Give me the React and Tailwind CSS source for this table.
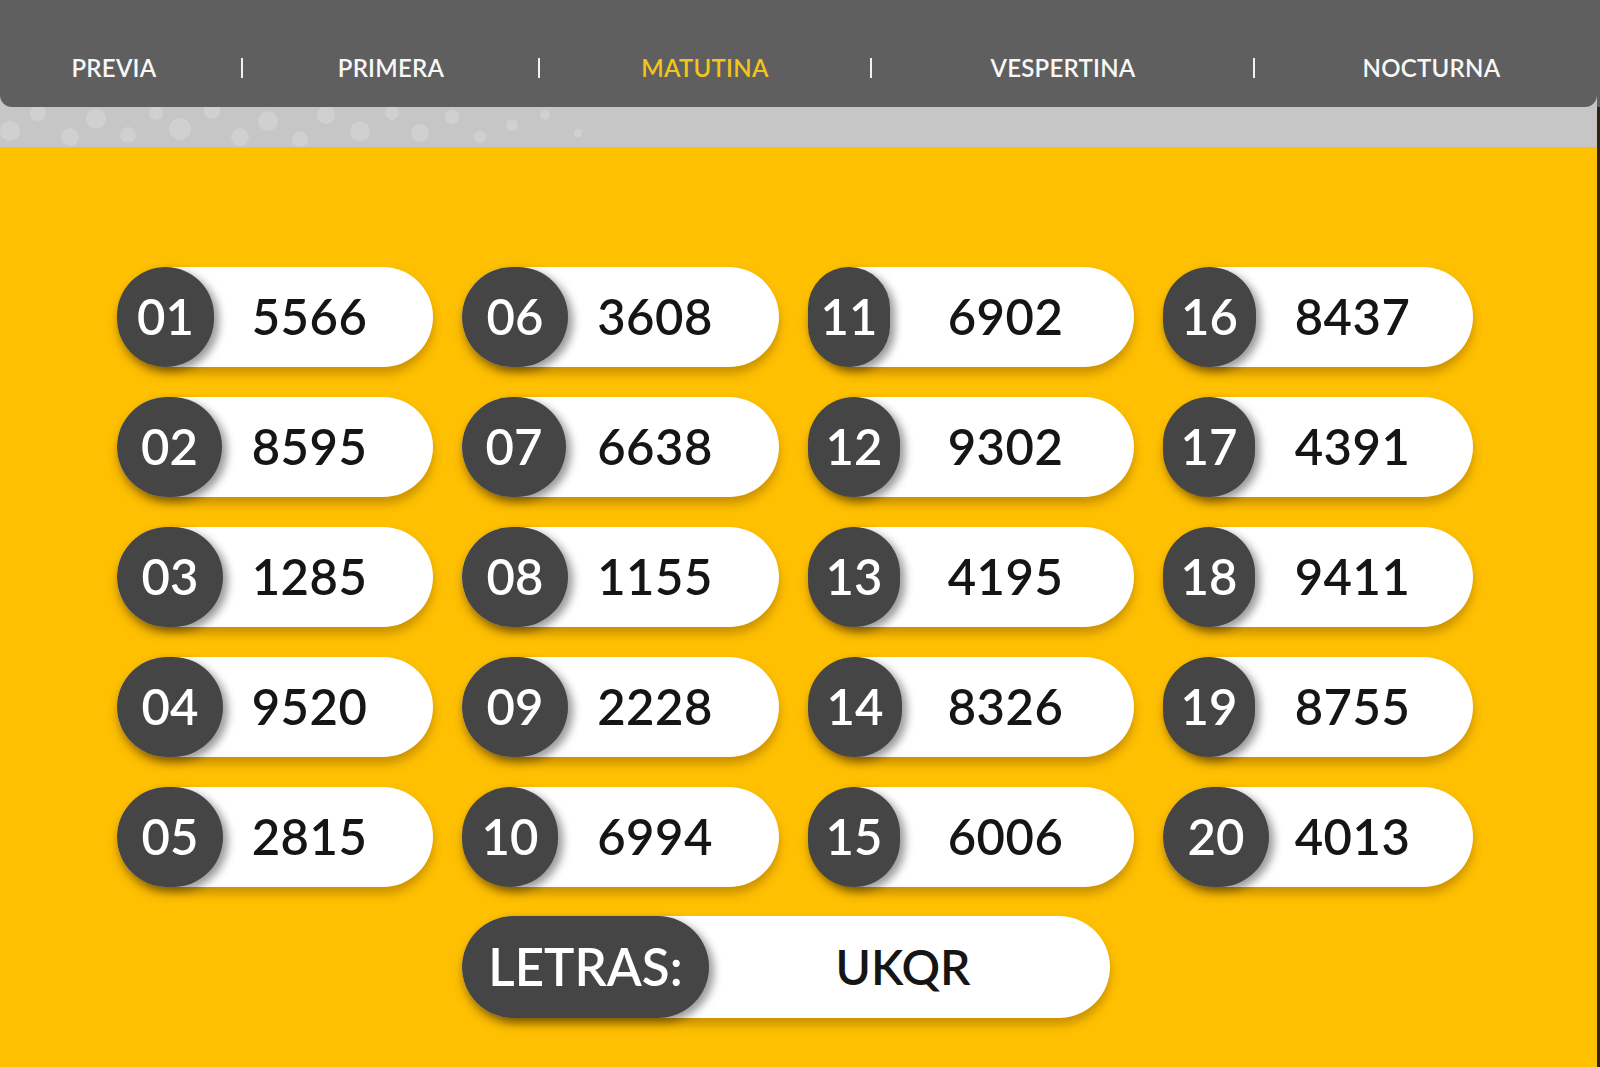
import React from "react";

const NAV = [
  { label: "PREVIA", w: "w-[228px]" },
  { sep: true, w: "w-[28px]" },
  { label: "PRIMERA", w: "w-[270px]" },
  { sep: true, w: "w-[26px]" },
  { label: "MATUTINA", w: "w-[306px]", active: true },
  { sep: true, w: "w-[26px]" },
  { label: "VESPERTINA", w: "w-[358px]" },
  { sep: true, w: "w-[24px]" },
  { label: "NOCTURNA", w: "flex-1" },
];

const RESULTS = [
  { n: "01", v: "5566", w: "w-[97px]" },
  { n: "02", v: "8595", w: "w-[105px]" },
  { n: "03", v: "1285", w: "w-[106px]" },
  { n: "04", v: "9520", w: "w-[106px]" },
  { n: "05", v: "2815", w: "w-[106px]" },
  { n: "06", v: "3608", w: "w-[106px]" },
  { n: "07", v: "6638", w: "w-[104px]" },
  { n: "08", v: "1155", w: "w-[106px]" },
  { n: "09", v: "2228", w: "w-[106px]" },
  { n: "10", v: "6994", w: "w-[96px]" },
  { n: "11", v: "6902", w: "w-[82px]" },
  { n: "12", v: "9302", w: "w-[92px]" },
  { n: "13", v: "4195", w: "w-[92px]" },
  { n: "14", v: "8326", w: "w-[94px]" },
  { n: "15", v: "6006", w: "w-[92px]" },
  { n: "16", v: "8437", w: "w-[93px]" },
  { n: "17", v: "4391", w: "w-[92px]" },
  { n: "18", v: "9411", w: "w-[92px]" },
  { n: "19", v: "8755", w: "w-[92px]" },
  { n: "20", v: "4013", w: "w-[106px]" },
];

// background dots on the grey strip
const DOTS = [
  [10, 24, 10], [38, 6, 8], [70, 30, 9], [96, 12, 10], [128, 28, 8], [156, 6, 7],
  [180, 22, 11], [212, 4, 8], [240, 30, 9], [268, 14, 10], [300, 32, 8], [326, 8, 9],
  [360, 24, 10], [392, 6, 7], [420, 26, 9], [452, 10, 7], [480, 30, 6], [512, 18, 6],
  [545, 8, 5], [578, 26, 4],
];

function Pill({ n, v, w }) {
  return (
    <div className="relative h-[100px] rounded-full bg-white shadow-[0_7px_10px_rgba(110,60,0,0.35)] flex items-center">
      <div className={`absolute left-0 top-0 h-full ${w} rounded-full bg-[#454545] flex items-center justify-center text-white text-[49px] font-semibold shadow-[5px_4px_9px_rgba(0,0,0,0.4)]`}>
        {n}
      </div>
      <div className="flex-1 ml-[100px] mr-[31px] text-center text-[#151515] text-[49px] font-semibold tracking-[0.01em]">
        {v}
      </div>
    </div>
  );
}

export default function App() {
  return (
    <div className="w-[1600px] h-[1067px] flex flex-col bg-[#c4c4c4] overflow-hidden font-[Lato,sans-serif]">
      <div className="flex">
        <div className="flex-1 h-[107px] bg-[#5f5f5f] rounded-b-[12px] flex items-center pt-[29px]">
          {NAV.map((item, i) =>
            item.sep ? (
              <div key={i} className={`${item.w} flex justify-center`}>
                <div className="w-[2px] h-[20px] bg-[#f2f2f2]" />
              </div>
            ) : (
              <div
                key={i}
                className={`${item.w} text-center text-[24px] font-semibold tracking-[0.01em] ${item.active ? "text-[#f3c41b]" : "text-[#f7f7f7]"}`}
              >
                {item.label}
              </div>
            )
          )}
        </div>
        <div className="w-[3px] bg-[#5f5f5f]" />
      </div>

      <div className="flex-1 flex">
        <div className="flex-1 flex flex-col">
          <div className="h-[40px] bg-[#c6c6c6]">
            <svg width="600" height="40" viewBox="0 0 600 40">
              {DOTS.map(([x, y, r], i) => (
                <circle key={i} cx={x} cy={y} r={r} fill="#ffffff" opacity="0.18" />
              ))}
            </svg>
          </div>
          <div className="flex-1 bg-[#fec000] pt-[120px] pl-[117px]">
            <div className="grid grid-cols-[316px_317px_326px_310px] grid-rows-5 grid-flow-col gap-x-[29px] gap-y-[30px]">
              {RESULTS.map((r) => (
                <Pill key={r.n} {...r} />
              ))}
            </div>
            <div className="mt-[29px] ml-[345px] w-[648px] relative h-[102px] rounded-full bg-white shadow-[0_7px_10px_rgba(110,60,0,0.35)] flex items-center">
              <div className="absolute left-0 top-0 h-full w-[247px] rounded-full bg-[#454545] flex items-center justify-center text-white text-[51px] font-semibold shadow-[5px_4px_9px_rgba(0,0,0,0.4)]">
                LETRAS:
              </div>
              <div className="flex-1 ml-[247px] mr-[13px] text-center text-[#151515] text-[48px] font-semibold">
                UKQR
              </div>
            </div>
          </div>
        </div>
        <div className="w-[3px] bg-[#2e2510]" />
      </div>
    </div>
  );
}
